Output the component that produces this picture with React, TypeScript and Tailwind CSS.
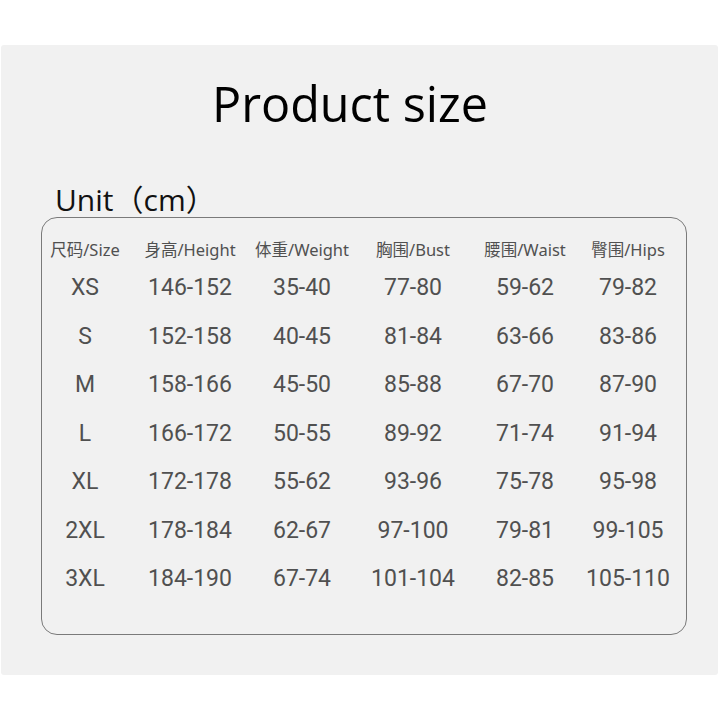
const headers = ["尺码/Size", "身高/Height", "体重/Weight", "胸围/Bust", "腰围/Waist", "臀围/Hips"];

const rows = [
  ["XS", "146-152", "35-40", "77-80", "59-62", "79-82"],
  ["S", "152-158", "40-45", "81-84", "63-66", "83-86"],
  ["M", "158-166", "45-50", "85-88", "67-70", "87-90"],
  ["L", "166-172", "50-55", "89-92", "71-74", "91-94"],
  ["XL", "172-178", "55-62", "93-96", "75-78", "95-98"],
  ["2XL", "178-184", "62-67", "97-100", "79-81", "99-105"],
  ["3XL", "184-190", "67-74", "101-104", "82-85", "105-110"],
];

const cols = "grid grid-cols-[80px_130px_94px_128px_96px_110px]";

export default function App() {
  return (
    <div className="w-[720px] h-[720px] bg-white pt-[45px]">
      <div className="mx-[1px] w-[717px] h-[630px] bg-[#f1f1f1] rounded-[3px] flex flex-col">
        <h1 className="mt-[28px] h-[60px] pl-[211px] text-[48.5px] leading-[60px] text-black font-['Open_Sans','Noto_Sans_CJK_SC',sans-serif]">
          Product size
        </h1>
        <div className="mt-[49px] h-[35px] pl-[54px] text-[30px] leading-[35px] text-[#111] font-['Open_Sans','Noto_Sans_CJK_SC',sans-serif]">
          Unit（cm）
        </div>
        <div className="ml-[40px] w-[646px] h-[418px] border-[1.5px] border-[#7a7a7a] rounded-[16px] pt-[18px] pl-[3px]">
          <div className={`${cols} h-[28px] items-center text-[16.5px] text-[#505050] font-['Noto_Sans','Noto_Sans_CJK_SC',sans-serif]`}>
            {headers.map((h) => (
              <div key={h} className="text-center whitespace-nowrap">
                {h}
              </div>
            ))}
          </div>
          {rows.map((r) => (
            <div
              key={r[0]}
              className={`${cols} h-[48.5px] items-center text-[23px] text-[#505050] font-['Roboto','Noto_Sans',sans-serif]`}
            >
              {r.map((c, i) => (
                <div key={i} className="text-center whitespace-nowrap">
                  {c}
                </div>
              ))}
            </div>
          ))}
        </div>
      </div>
    </div>
  );
}
